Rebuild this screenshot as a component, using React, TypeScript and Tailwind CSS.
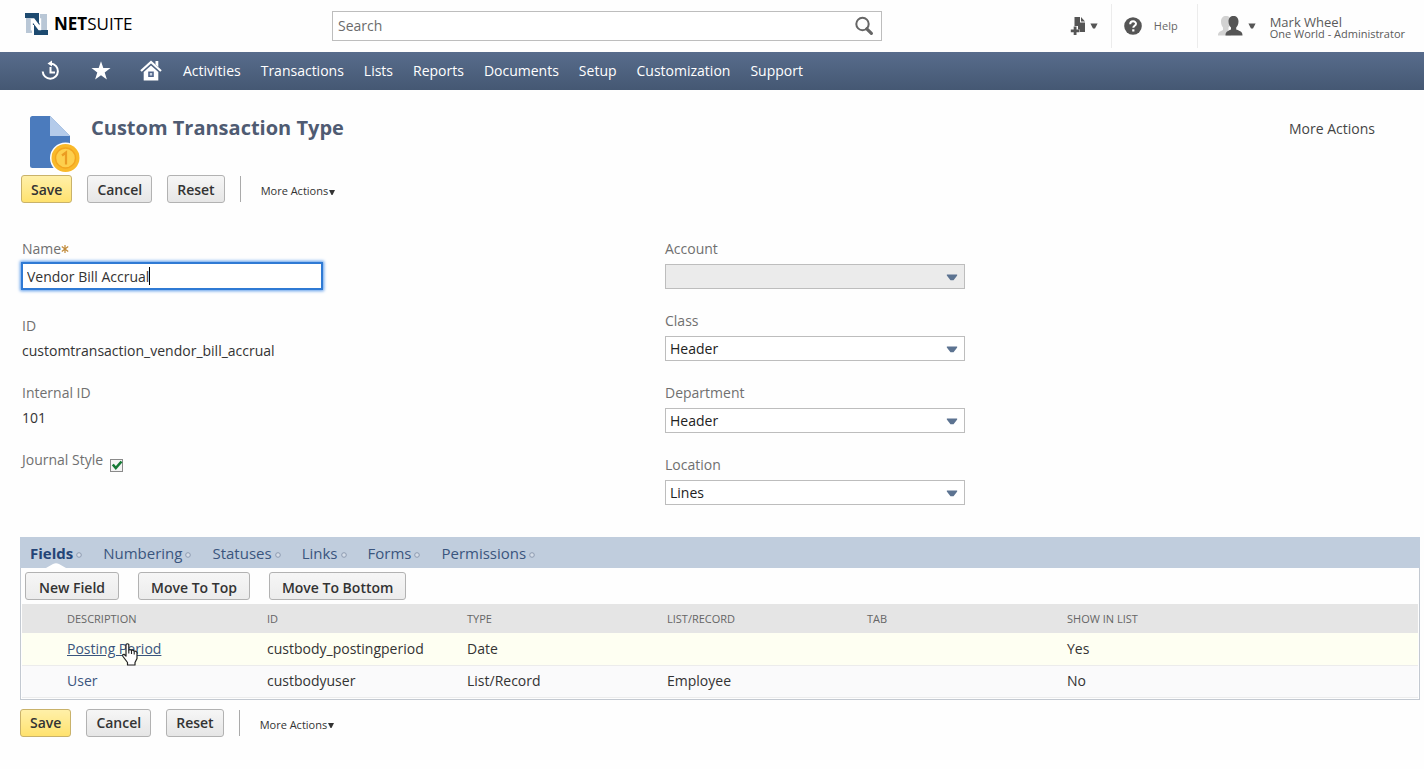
import React from "react";

const navItems = ["Activities", "Transactions", "Lists", "Reports", "Documents", "Setup", "Customization", "Support"];
const tabs = ["Fields", "Numbering", "Statuses", "Links", "Forms", "Permissions"];
const columns = ["DESCRIPTION", "ID", "TYPE", "LIST/RECORD", "TAB", "SHOW IN LIST"];

const rows = [
  { name: "Posting Period", id: "custbody_postingperiod", type: "Date", list: "", tab: "", show: "Yes", hovered: true },
  { name: "User", id: "custbodyuser", type: "List/Record", list: "Employee", tab: "", show: "No", hovered: false },
];

const dropdowns = [
  { label: "Account", value: "", disabled: true },
  { label: "Class", value: "Header", disabled: false },
  { label: "Department", value: "Header", disabled: false },
  { label: "Location", value: "Lines", disabled: false },
];

function Caret() {
  return (
    <svg width="8" height="6" viewBox="0 0 8 6" aria-hidden="true">
      <path d="M0.4 0.5h7.2L5 5.4H3z" fill="#555" />
    </svg>
  );
}

function Logo() {
  return (
    <a href="#home" className="flex items-center gap-1.5 text-black">
      <svg width="23" height="22" viewBox="0 0 23 22" aria-hidden="true">
        <path d="M1 5h6v15H1z" fill="#b9c7d6" />
        <path d="M15 1h7v16h-7z" fill="#b9c7d6" />
        <path d="M0 0h14v12H6V5H0z" fill="#1d4a70" />
        <path d="M9 22V10h7v7h7v5z" fill="#1d4a70" />
        <path d="M5.800 5.200h3.400l5.300 7V5.200h1.700v12h-2.600L7.900 9.800v7.600H5.800z" fill="#fff" />
      </svg>
      <span className="text-[17px] leading-5">
        <b>NET</b>SUITE
      </span>
    </a>
  );
}

function Header() {
  return (
    <header className="flex h-[52px] items-center pl-[25px]">
      <div className="w-[307px] shrink-0 pb-1">
        <Logo />
      </div>
      <form className="flex h-[30px] w-[550px] items-center border border-[#bdbdbd] bg-white">
        <input
          type="text"
          aria-label="Search"
          placeholder="Search"
          className="min-w-0 flex-1 px-[5px] text-sm outline-none placeholder:text-[#6b6b6b]"
        />
        <button type="button" aria-label="Run search" className="mr-[7px]">
          <svg width="20" height="20" viewBox="0 0 20 20" fill="none" stroke="#666">
            <circle cx="8.500" cy="8" r="6.200" strokeWidth="2" />
            <path d="M12.800 12.800l4.600 4.600" strokeWidth="3.200" strokeLinecap="round" />
          </svg>
        </button>
      </form>
      <div className="ml-auto flex items-center">
        <button type="button" aria-label="Create new" className="mr-[13px] flex items-center gap-px">
          <svg width="19" height="20" viewBox="0 0 19 20" fill="#555">
            <path d="M4.500 1h5.500v5.500h5V16H9.800v-2.500H8V10H4.500z" />
            <path d="M11 1l4 4.400h-4z" />
            <path d="M3.700 10.500h2.800v2.900h2.900v2.800H6.500v2.900H3.700v-2.900H.8v-2.800h2.900z" />
          </svg>
          <Caret />
        </button>
        <div className="flex h-11 items-center border-x border-[#ececec] pr-[19px] pl-3">
          <a href="#help" className="flex items-center gap-3 text-[11px] text-[#666]">
            <svg width="18" height="18" viewBox="0 0 18 18">
              <circle cx="9" cy="9" r="8.800" fill="#555" />
              <path d="M6.200 7.200c0-3.800 5.800-3.700 5.800-.4 0 2-2.700 2-2.700 4" fill="none" stroke="#fff" strokeWidth="2" />
              <rect x="8.200" y="12.300" width="2.200" height="2.200" fill="#fff" />
            </svg>
            Help
          </a>
        </div>
        <button type="button" className="flex items-center pr-[19px] pl-[19px] text-left text-[#5a5a5a]">
          <svg width="27" height="22" viewBox="0 0 27 22" className="mr-1">
            <path d="M9 1c3 0 5 2 5 5.500 0 3-1.500 5-2.500 6v3L14 20.500H1c0-3 1-3.500 5-5.500v-2.500C5 11.500 4 9.500 4 6.500 4 3 6 1 9 1z" fill="#d2d2d2" />
            <path d="M16.500 1c3 0 5 2 5 5.500 0 3-1.200 5-2.300 6v2c4.600 1.700 6.300 2.500 6.300 6h-17c0-3.500 1.700-4.300 5.500-6v-2c-1.200-1-2.500-3-2.500-6C11.500 3 13.500 1 16.500 1z" fill="#555" />
          </svg>
          <Caret />
          <span className="ml-3.5 flex flex-col pt-1">
            <span className="text-[13px] leading-3">Mark Wheel</span>
            <span className="text-[11px] leading-3">One World - Administrator</span>
          </span>
        </button>
      </div>
    </header>
  );
}

function NavBar() {
  return (
    <nav className="flex h-[38px] items-center bg-linear-to-b from-[#586c8c] to-[#455873] pl-10 text-sm text-white">
      <div className="mr-[21px] flex gap-7">
        <a href="#recent" aria-label="Recent records">
          <svg width="22" height="22" viewBox="0 0 22 22" fill="none" stroke="#fff">
            <path d="M11 3.500a7.600 7.600 0 1 1-8.300 8" strokeWidth="2" />
            <path d="M12 .4v6.200L7.500 3.500z" fill="#fff" stroke="none" />
            <path d="M10.500 7v5.500h4.500" strokeWidth="2" />
          </svg>
        </a>
        <a href="#shortcuts" aria-label="Shortcuts">
          <svg width="22" height="22" viewBox="0 0 22 22" fill="#fff">
            <path d="M11 1.200l2.300 6.900h7.200l-5.800 4.300 2.200 7.100-5.900-4.300-5.900 4.300 2.200-7.100L1.500 8.100h7.200z" />
          </svg>
        </a>
        <a href="#home" aria-label="Home">
          <svg width="22" height="22" viewBox="0 0 22 22">
            <path d="M1 11L11 2l10 9" fill="none" stroke="#fff" strokeWidth="2.200" />
            <path d="M15.500 1h2.800v6l-2.800-2.500z" fill="#fff" />
            <path d="M11 5.500l7.300 6.500v8.500H3.700V12z" fill="#fff" />
            <path d="M8.200 11.500h5.600v5.500H8.200z" fill="#50648a" />
            <path d="M9.800 13h2.400v2.500H9.800z" fill="#c9d2df" />
          </svg>
        </a>
      </div>
      <ul className="flex gap-5">
        {navItems.map((item) => (
          <li key={item}>
            <a href={"#" + item.toLowerCase()}>{item}</a>
          </li>
        ))}
      </ul>
    </nav>
  );
}

function ActionBar() {
  return (
    <div className="flex items-center gap-[15px] text-sm font-semibold text-[#333]">
      <button type="button" className="h-7 rounded-[3px] border border-[#c9b26a] bg-linear-to-b from-[#fff0a8] to-[#ffe26e] px-[9px] pt-px">
        Save
      </button>
      <button type="button" className="h-7 rounded-[3px] border border-[#b2b2b2] bg-linear-to-b from-[#f6f6f6] to-[#e6e6e6] px-[9px] pt-px">
        Cancel
      </button>
      <button type="button" className="h-7 rounded-[3px] border border-[#b2b2b2] bg-linear-to-b from-[#f6f6f6] to-[#e6e6e6] px-[9px] pt-px">
        Reset
      </button>
      <button type="button" className="flex h-[26px] items-center gap-px border-l border-[#aaa] pt-1 pl-5 text-[11px] font-normal">
        More Actions
        <svg width="6" height="5" viewBox="0 0 6 5" className="mt-0.5" aria-hidden="true">
          <path d="M0 0h6L3.500 5h-1z" fill="#333" />
        </svg>
      </button>
    </div>
  );
}

function RecordIcon() {
  return (
    <svg width="51" height="57" viewBox="0 0 51 57" className="shrink-0" aria-hidden="true">
      <path d="M2.500 0H20l20 20v32H2.500Q0 52 0 49.500v-47Q0 0 2.500 0z" fill="#4b7bbd" />
      <path d="M20 0l20 20H20z" fill="#b4cbea" />
      <circle cx="35.500" cy="42" r="15.500" fill="#fff" />
      <circle cx="35.500" cy="42" r="14" fill="#f9b92a" />
      <circle cx="35.500" cy="42" r="10" fill="#fdcf4d" stroke="#f3a51f" strokeWidth="1.400" />
      <path d="M32 39.500l4-3v12" fill="none" stroke="#eb9c22" strokeWidth="2.200" />
    </svg>
  );
}

function DetailsForm() {
  return (
    <div className="mt-9 grid grid-cols-[643px_1fr] px-[22px] text-sm leading-5 text-[#333]">
      <div>
        <label htmlFor="name" className="flex items-center text-[#707070]">
          Name
          <svg width="8" height="10" viewBox="0 0 8 10" fill="none" stroke="#c08a3a" strokeWidth="1.200" aria-hidden="true">
            <path d="M4 1v8M0.800 2.500l6.400 5M7.200 2.500l-6.400 5" />
          </svg>
        </label>
        <div className="relative mt-1 w-[300px]">
          <input
            id="name"
            type="text"
            defaultValue="Vendor Bill Accrual"
            className="h-[26px] w-full border border-[#2f7ad4] bg-white px-1 outline-none ring-1 ring-[#2f7ad4] shadow-[0_0_3px_2px_#5b9bea]"
          />
          <span className="absolute top-1 left-[127px] h-[18px] w-px bg-black" />
        </div>
        <p className="mt-[27px] text-[#707070]">ID</p>
        <p className="mt-[5px]">customtransaction_vendor_bill_accrual</p>
        <p className="mt-[22px] text-[#707070]">Internal ID</p>
        <p className="mt-[5px]">101</p>
        <label className="mt-[22px] flex gap-[7px] text-[#707070]">
          Journal Style
          <span className="relative mt-[9px] h-[13px] w-[13px]">
            <input
              type="checkbox"
              defaultChecked
              className="peer block h-[13px] w-[13px] appearance-none border border-[#8a8a8a] bg-[#f4f4f4]"
            />
            <svg width="13" height="13" viewBox="0 0 13 13" className="pointer-events-none absolute top-0 left-0 hidden peer-checked:block">
              <path d="M2.800 5.500l3 3.500L11.500 2.500" fill="none" stroke="#157a35" strokeWidth="2.600" />
            </svg>
          </span>
        </label>
      </div>
      <div className="flex flex-col gap-[22px]">
        {dropdowns.map((field) => (
          <label key={field.label} className="block w-[300px] text-[#707070]">
            {field.label}
            <span className="relative mt-[5px] block">
              <select
                disabled={field.disabled}
                defaultValue={field.value}
                className="block h-[25px] w-full appearance-none border border-[#bdbdbd] bg-white px-1 text-[#222] disabled:bg-[#ebebeb] disabled:opacity-100"
              >
                <option>{field.value}</option>
              </select>
              <svg width="12" height="7" viewBox="0 0 12 7" className="pointer-events-none absolute top-2.5 right-[7px]">
                <path d="M1 .5h10q.6.600 0 1.200L7.500 6.300h-3L1 1.700Q.4 1 1 .5z" fill="#5c7391" />
              </svg>
            </span>
          </label>
        ))}
      </div>
    </div>
  );
}

function HandPointer() {
  return (
    <svg width="17" height="23" viewBox="0 0 17 23" className="pointer-events-none absolute top-2.5 left-[60px]" aria-hidden="true">
      <path
        d="M4 1.500q1.500-1.500 2.800 0V7q1.500-1 2.700.5 1.500-.8 2.700.7 2-.5 2.800 1.300v6l-2 4v2.500H5.500v-2.500L1 13.500q-1-2.200 1-2.200l2 1.700z"
        fill="#fff"
        stroke="#222"
        strokeWidth="1.200"
        strokeLinejoin="round"
      />
      <path d="M6.800 7v3.500M9.500 7.500v3.500M12.200 8.200v3.300" stroke="#222" strokeWidth="1.100" />
    </svg>
  );
}

function FieldsPanel() {
  return (
    <section className="mt-8 mr-1 ml-5">
      <div role="tablist" className="flex h-[31px] gap-[21px] bg-[#c0cddd] px-2.5 text-[15px] text-[#3a557e]">
        {tabs.map((tab, i) => (
          <button
            key={tab}
            type="button"
            role="tab"
            aria-selected={i === 0}
            className="group relative flex items-center gap-[3px] pt-px aria-selected:font-bold aria-selected:text-[#244476]"
          >
            {tab}
            <svg width="6" height="6" viewBox="0 0 6 6" className="mt-[3px]" aria-hidden="true">
              <circle cx="3" cy="3" r="2.300" fill="#d5dde8" stroke="#8d9bb0" />
            </svg>
            <svg width="20" height="5" viewBox="0 0 20 5" className="absolute bottom-0 left-4 hidden group-aria-selected:block">
              <path d="M0 5l7-4q3-1.500 6 0l7 4z" fill="#fff" />
            </svg>
          </button>
        ))}
      </div>
      <div className="border border-t-0 border-[#c3c9d1] px-px pb-px">
        <div className="flex gap-[19px] px-[3px] py-1 text-sm font-semibold text-[#333]">
          {["New Field", "Move To Top", "Move To Bottom"].map((label) => (
            <button key={label} type="button" className="h-7 min-w-[94px] rounded-[3px] border border-[#b2b2b2] bg-linear-to-b from-[#f6f6f6] to-[#ececec] px-3 pt-[3px]">
              {label}
            </button>
          ))}
        </div>
        <table className="w-full table-fixed text-left text-sm text-[#333]">
          <colgroup>
            <col className="w-10" />
            <col className="w-[200px]" />
            <col className="w-[200px]" />
            <col className="w-[200px]" />
            <col className="w-[200px]" />
            <col className="w-[200px]" />
            <col />
          </colgroup>
          <thead>
            <tr className="h-[29px] bg-[#e5e5e5] text-[11px] text-[#666]">
              <td />
              {columns.map((c) => (
                <th key={c} scope="col" className="pl-[5px] font-normal">
                  {c}
                </th>
              ))}
            </tr>
          </thead>
          <tbody>
            {rows.map((r) => (
              <tr key={r.id} className={r.hovered ? "h-8 border-b border-[#ececec] bg-[#fefff2]" : "h-8 border-b border-[#ececec] bg-[#fafafb]"}>
                <td />
                <td className="relative pl-[5px]">
                  <a href={"#" + r.id} className={r.hovered ? "text-[#3a557e] underline" : "text-[#3a557e]"}>
                    {r.name}
                  </a>
                  {r.hovered && <HandPointer />}
                </td>
                <td className="pl-[5px]">{r.id}</td>
                <td className="pl-[5px]">{r.type}</td>
                <td className="pl-[5px]">{r.list}</td>
                <td className="pl-[5px]">{r.tab}</td>
                <td className="pl-[5px]">{r.show}</td>
              </tr>
            ))}
          </tbody>
        </table>
      </div>
    </section>
  );
}

export default function App() {
  return (
    <div className="min-h-screen bg-[#fefefe] font-['Open_Sans','Noto_Sans',sans-serif]">
      <Header />
      <NavBar />
      <main>
        <div className="flex items-start pt-[26px] pr-[49px] pl-[30px]">
          <RecordIcon />
          <h1 className="ml-2.5 text-xl leading-6 font-bold text-[#4f5b72]">Custom Transaction Type</h1>
          <a href="#more" className="ml-auto pt-[3px] text-sm text-[#444]">
            More Actions
          </a>
        </div>
        <div className="mt-0.5 pl-[21px]">
          <ActionBar />
        </div>
        <DetailsForm />
        <FieldsPanel />
        <div className="mt-[9px] pl-5">
          <ActionBar />
        </div>
      </main>
    </div>
  );
}
